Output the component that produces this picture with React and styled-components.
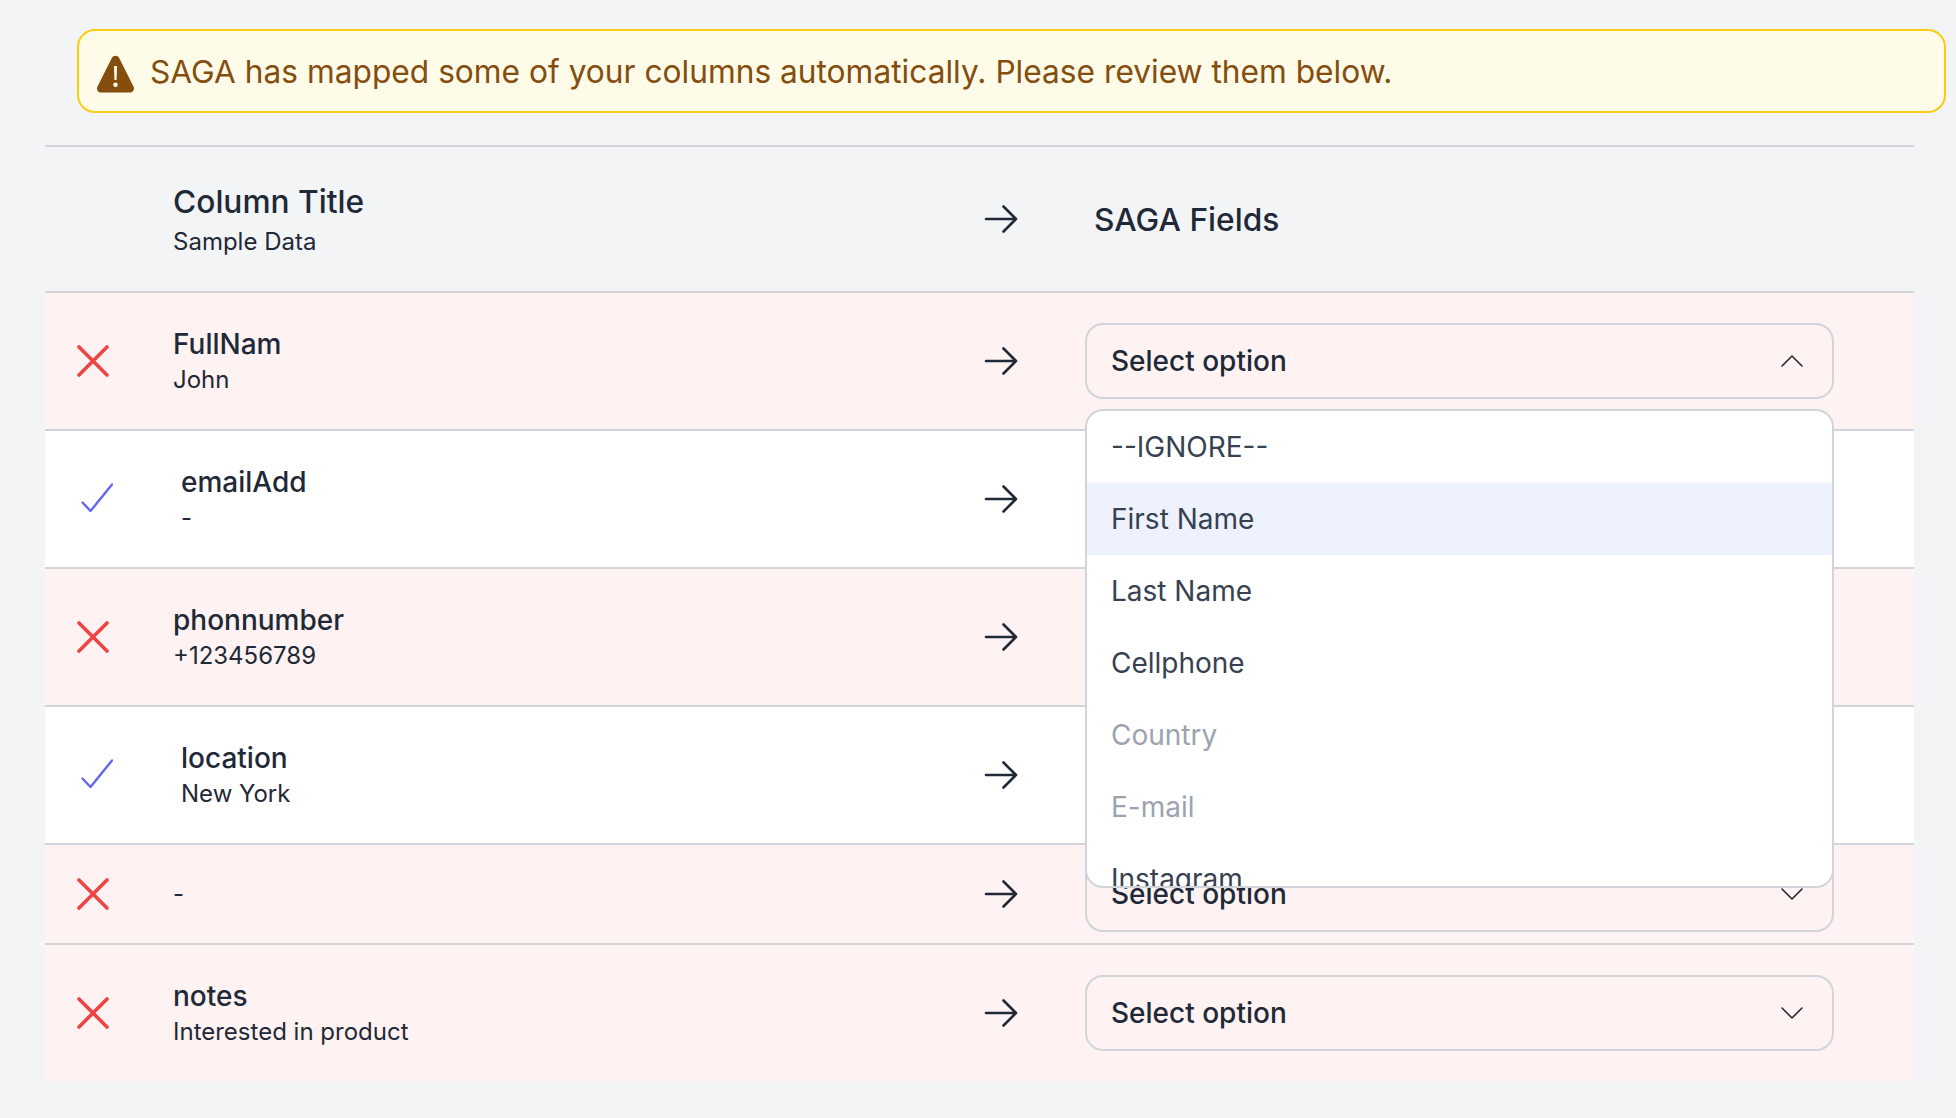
import React from "react";
import styled, { createGlobalStyle } from "styled-components";

const rows = [
  { name: "FullNam", sample: "John", ok: false, open: true },
  { name: "emailAdd", sample: "-", ok: true },
  { name: "phonnumber", sample: "+123456789", ok: false },
  { name: "location", sample: "New York", ok: true },
  { sample: "-", ok: false, short: true },
  { name: "notes", sample: "Interested in product", ok: false },
];

const options = [
  { label: "--IGNORE--" },
  { label: "First Name", active: true },
  { label: "Last Name" },
  { label: "Cellphone" },
  { label: "Country", muted: true },
  { label: "E-mail", muted: true },
  { label: "Instagram" },
];

function WarningIcon() {
  return (
    <WarnSvg viewBox="0 0 36 36">
      <path
        fill="#854d0e"
        fillRule="evenodd"
        d="M14.6 3.6c1.5-2.6 5.3-2.6 6.8 0l13.3 26.6c1.2 2.6-.6 5.4-3.4 5.4H4.7c-2.8 0-4.6-2.8-3.4-5.4L14.6 3.6zM16.6 11h2.8l-.4 13h-2l-.4-13zM18 26.2a2.1 2.1 0 1 1 0 4.2 2.1 2.1 0 0 1 0-4.2z"
      />
    </WarnSvg>
  );
}

function CrossIcon() {
  return (
    <StatusSvg viewBox="0 0 32 32" width="32" height="32">
      <path d="M2 2 30 30M30 2 2 30" stroke="#ef4444" strokeWidth="3.6" strokeLinecap="round" fill="none" />
    </StatusSvg>
  );
}

function CheckIcon() {
  return (
    <StatusSvg viewBox="0 0 32 32" width="32" height="32">
      <path d="M1.5 19.5 9.5 28 31 1.5" stroke="#6366f1" strokeWidth="2.4" strokeLinecap="round" strokeLinejoin="round" fill="none" />
    </StatusSvg>
  );
}

function ArrowIcon() {
  return (
    <svg viewBox="0 0 34 28" width="34" height="28">
      <path d="M2 14H32M19.5 1.5 32 14 19.5 26.5" stroke="#1f2937" strokeWidth="2.6" strokeLinecap="round" strokeLinejoin="round" fill="none" />
    </svg>
  );
}

function Chevron({ up }) {
  return (
    <svg viewBox="0 0 22 12" width="22" height="12">
      <path d={up ? "M1 11 11 1 21 11" : "M1 1 11 11 21 1"} stroke="#1f2937" strokeWidth="1.6" strokeLinecap="round" strokeLinejoin="round" fill="none" />
    </svg>
  );
}

export default function App() {
  return (
    <>
      <GlobalStyle />
      <Page>
        <Banner>
          <WarningIcon />
          <span>SAGA has mapped some of your columns automatically. Please review them below.</span>
        </Banner>
        <Table>
          <HeaderRow>
            <NameCell $offset={128}>
              <ColumnTitle>Column Title</ColumnTitle>
              <Sample>Sample Data</Sample>
            </NameCell>
            <ArrowCell>
              <ArrowIcon />
            </ArrowCell>
            <FieldsTitle>SAGA Fields</FieldsTitle>
          </HeaderRow>
          {rows.map((row, i) => (
            <Row key={i} $ok={row.ok} $short={row.short}>
              <StatusCell $ok={row.ok}>{row.ok ? <CheckIcon /> : <CrossIcon />}</StatusCell>
              <NameCell>
                {row.name && <Name>{row.name}</Name>}
                <Sample>{row.sample}</Sample>
              </NameCell>
              <ArrowCell>
                <ArrowIcon />
              </ArrowCell>
              <SelectWrap>
                <SelectBox>
                  <span>Select option</span>
                  <Chevron up={row.open} />
                </SelectBox>
                {row.open && (
                  <Menu>
                    {options.map((o) => (
                      <Option key={o.label} $active={o.active} $muted={o.muted}>
                        {o.label}
                      </Option>
                    ))}
                  </Menu>
                )}
              </SelectWrap>
            </Row>
          ))}
        </Table>
      </Page>
    </>
  );
}

const GlobalStyle = createGlobalStyle`
  html, body {
    margin: 0;
    background: #f3f4f6;
  }
  body {
    font-family: Inter, "Liberation Sans", sans-serif;
    color: #1f2937;
  }
`;

const Page = styled.div`
  width: 1956px;
  height: 1118px;
  overflow: hidden;
  padding: 29px 0 0 45px;
  box-sizing: border-box;
`;

const Banner = styled.div`
  display: flex;
  align-items: center;
  gap: 15px;
  box-sizing: border-box;
  width: 1869px;
  height: 84px;
  margin-left: 32px;
  padding-left: 17px;
  background: #fefce8;
  border: 2px solid #facc15;
  border-radius: 18px;
  color: #854d0e;
  font-size: 31.7px;
`;

const WarnSvg = styled.svg`
  width: 39px;
  height: 39px;
  margin-top: 4px;
  flex: none;
`;

const Table = styled.div`
  width: 1869px;
  margin-top: 32px;
`;

const HeaderRow = styled.div`
  display: flex;
  align-items: center;
  height: 146px;
  box-sizing: border-box;
  border-top: 2px solid #d1d5db;
`;

const Row = styled.div`
  display: flex;
  align-items: center;
  box-sizing: border-box;
  height: ${(p) => (p.$short ? "100px" : "138px")};
  background: ${(p) => (p.$ok ? "#ffffff" : "#fef2f2")};
  border-top: 2px solid #d1d5db;
`;

const StatusCell = styled.div`
  flex: none;
  box-sizing: border-box;
  width: ${(p) => (p.$ok ? "136px" : "128px")};
  padding-left: ${(p) => (p.$ok ? "36px" : "32px")};
  display: flex;
  align-items: center;
`;

const StatusSvg = styled.svg`
  display: block;
`;

const NameCell = styled.div`
  flex: 1;
  min-width: 0;
  box-sizing: border-box;
  padding-left: ${(p) => p.$offset || 0}px;
`;

const ColumnTitle = styled.div`
  font-size: 31.7px;
  font-weight: 500;
  line-height: 46px;
  color: #1f2937;
`;

const Name = styled.div`
  font-size: 28px;
  font-weight: 500;
  line-height: 37px;
  color: #1f2937;
`;

const Sample = styled.div`
  font-size: 24px;
  line-height: 34px;
  color: #1f2937;
`;

const ArrowCell = styled.div`
  flex: none;
  width: 101px;
  display: flex;
  align-items: center;
`;

const FieldsTitle = styled.div`
  flex: none;
  width: 829px;
  padding-left: 9px;
  box-sizing: border-box;
  font-size: 31.7px;
  font-weight: 500;
  color: #1f2937;
`;

const SelectWrap = styled.div`
  position: relative;
  flex: none;
  width: 749px;
  margin-right: 80px;
`;

const SelectBox = styled.div`
  display: flex;
  align-items: center;
  justify-content: space-between;
  box-sizing: border-box;
  height: 76px;
  padding: 0 29px 0 24px;
  border: 2px solid #d1d5db;
  border-radius: 18px;
  font-size: 28px;
  font-weight: 500;
  color: #1f2937;
`;

const Menu = styled.div`
  position: absolute;
  z-index: 5;
  top: 86px;
  left: 0;
  right: 0;
  height: 479px;
  box-sizing: border-box;
  overflow: hidden;
  background: #ffffff;
  border: 2px solid #d1d5db;
  border-radius: 18px;
`;

const Option = styled.div`
  display: flex;
  align-items: center;
  height: 72px;
  padding-left: 24px;
  font-size: 28px;
  background: ${(p) => (p.$active ? "#eef2ff" : "transparent")};
  color: ${(p) => (p.$muted ? "#9ca3af" : "#374151")};
`;
